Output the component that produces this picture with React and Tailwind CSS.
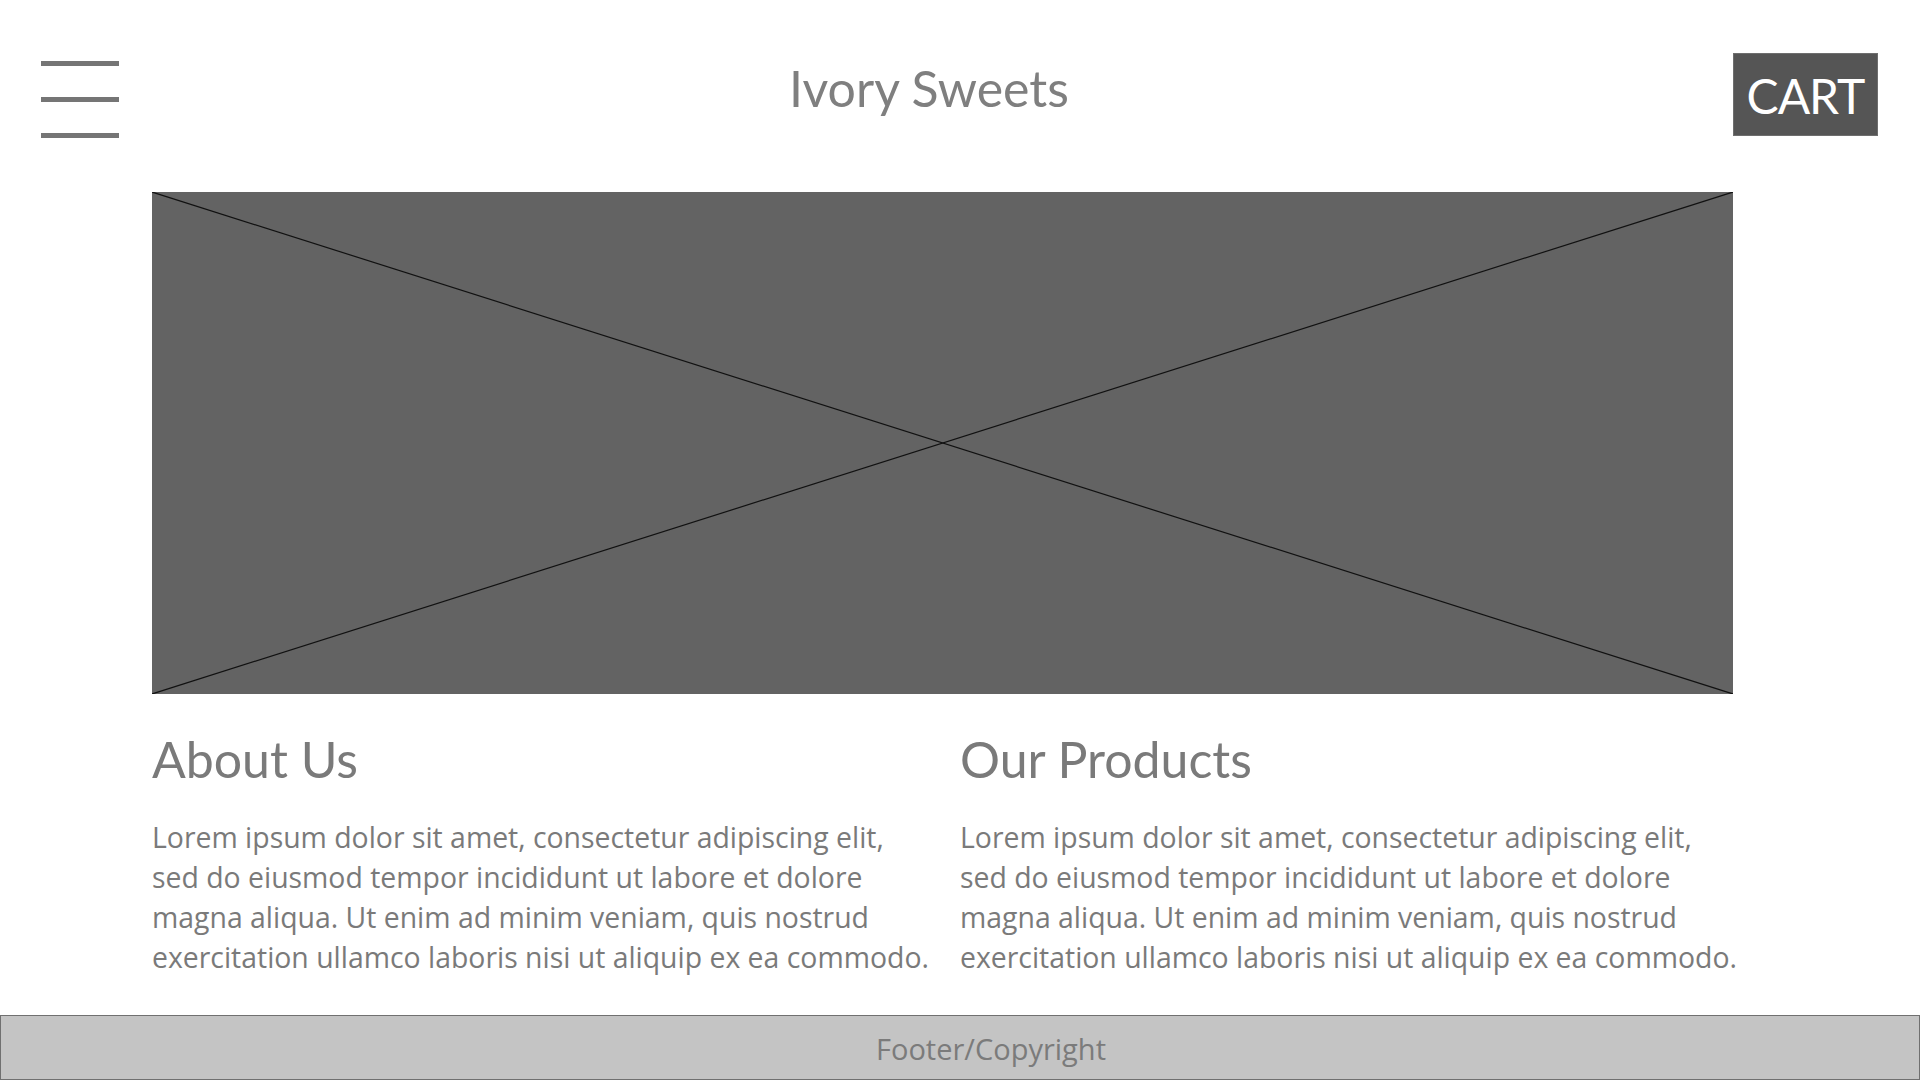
import React from "react";

const lorem = [
  "Lorem ipsum dolor sit amet, consectetur adipiscing elit,",
  "sed do eiusmod tempor incididunt ut labore et dolore",
  "magna aliqua. Ut enim ad minim veniam, quis nostrud",
  "exercitation ullamco laboris nisi ut aliquip ex ea commodo.",
];

const bodyFont = { fontFamily: "'Open Sans', Lato, sans-serif" };

function Column({ title }) {
  return (
    <div>
      <h2 className="text-[50px] leading-[60px] text-[#7a7a7a] whitespace-nowrap">{title}</h2>
      <p className="mt-[28px] text-[28.4px] leading-[40px] text-[#7a7a7a]" style={bodyFont}>
        {lorem.map((l, i) => (
          <span key={i} className="block whitespace-nowrap">
            {l}
          </span>
        ))}
      </p>
    </div>
  );
}

export default function App() {
  return (
    <div
      className="w-[1920px] h-[1080px] bg-white flex flex-col overflow-hidden"
      style={{ fontFamily: "Lato, 'Open Sans', sans-serif" }}
    >
      <header className="flex items-start h-[192px] pl-[41px] pr-[42px] shrink-0">
        <div className="mt-[61px] w-[78px] flex flex-col gap-[31px]">
          <div className="h-[5px] bg-[#757575]" />
          <div className="h-[5px] bg-[#757575]" />
          <div className="h-[5px] bg-[#757575]" />
        </div>
        <div className="flex-1 mt-[58px] pl-[6px] text-center text-[50px] leading-[60px] text-[#7f7f7f]">
          Ivory Sweets
        </div>
        <div className="mt-[53px] w-[145px] h-[83px] bg-[#555555] border border-[#6e6e6e] flex items-center justify-center pt-[2px] text-white text-[48px] leading-[58px] tracking-[-1px]">
          CART
        </div>
      </header>

      <div className="relative ml-[152px] w-[1581px] h-[502px] bg-[#636363] shrink-0">
        <svg
          className="absolute inset-0"
          width="1581"
          height="502"
          viewBox="0 0 1581 502"
        >
          <line x1="0" y1="0" x2="1581" y2="502" stroke="#111" strokeWidth="1.2" />
          <line x1="0" y1="502" x2="1581" y2="0" stroke="#111" strokeWidth="1.2" />
        </svg>
      </div>

      <div className="ml-[152px] mt-[35px] grid grid-cols-[808px_773px]">
        <Column title="About Us" />
        <Column title="Our Products" />
      </div>

      <footer
        className="mt-auto h-[65px] shrink-0 bg-[#c4c4c4] border border-[#707070] flex items-center justify-center pl-[62px] pt-[3px] text-[29px] text-[#7b7b7b]"
        style={bodyFont}
      >
        Footer/Copyright
      </footer>
    </div>
  );
}
